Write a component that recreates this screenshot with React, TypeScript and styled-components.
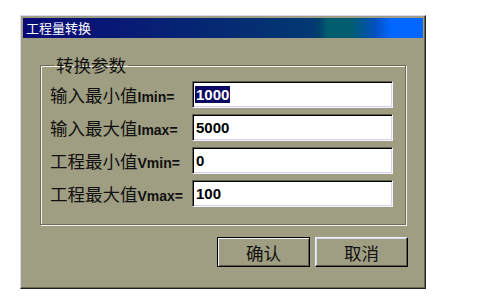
import React from 'react'
import styled, { createGlobalStyle } from 'styled-components'

const GlobalStyle = createGlobalStyle`
  html, body {
    margin: 0;
    padding: 0;
    background: #ffffff;
  }
  body {
    font-family: "Noto Sans CJK SC", "Liberation Sans", sans-serif;
  }
`

const Page = styled.div`
  width: 481px;
  height: 296px;
  padding: 15px 0 0 20px;
  box-sizing: border-box;
`

const Dialog = styled.div`
  width: 406px;
  height: 274px;
  box-sizing: border-box;
  background: #a09e82;
  border-top: 1px solid #d8d6f4;
  border-left: 1px solid #d8d6f4;
  border-right: 1px solid #202018;
  border-bottom: 1px solid #202018;
  box-shadow: inset -1px -1px 0 #6a6852;
  padding: 2px;
`

const TitleBar = styled.div`
  height: 20px;
  display: flex;
  align-items: center;
  padding-left: 3px;
  color: #ffffff;
  font-size: 13px;
  line-height: 20px;
  background: linear-gradient(
    to right,
    #0a0a76 0%,
    #033872 72%,
    #04406e 74%,
    #005c6e 76%,
    #005c6e 82%,
    #0250c0 88%,
    #0066ff 92%,
    #0066ff 100%
  );
`

const Group = styled.fieldset`
  width: 366px;
  box-sizing: border-box;
  margin: 18px 0 0 17px;
  padding: 7px 12px 17px 9px;
  border: 1px solid #6e6c58;
  box-shadow: 1px 1px 0 #f4f4ee, inset 1px 1px 0 #f4f4ee;
`

const Legend = styled.legend`
  padding: 0 2px;
  margin-left: 4px;
  font-size: 17.5px;
  line-height: 18px;
  color: #101010;
`

const Rows = styled.div`
  display: grid;
  grid-template-columns: 142px 201px;
  grid-auto-rows: 27px;
  row-gap: 6px;
  align-items: center;
`

const Label = styled.div`
  font-size: 17.5px;
  color: #101010;
  white-space: nowrap;
  display: flex;
  align-items: baseline;
`

const Latin = styled.span`
  font-family: "Liberation Sans", sans-serif;
  font-weight: bold;
  font-size: 14px;
`

const Field = styled.div`
  height: 27px;
  box-sizing: border-box;
  background: #ffffff;
  border-top: 1px solid #5e5c4a;
  border-left: 1px solid #5e5c4a;
  border-right: 1px solid #f4f4ff;
  border-bottom: 1px solid #f4f4ff;
  box-shadow: inset 1px 1px 0 #000000, inset -1px -1px 0 #d4d2ec;
  display: flex;
  align-items: center;
  padding-left: 2px;
  font-family: "Liberation Sans", sans-serif;
  font-weight: bold;
  font-size: 15px;
  color: #000000;
`

const Value = styled.span<{ $selected?: boolean }>`
  padding: 0 1px;
  line-height: 17px;
  background: ${p => (p.$selected ? '#0a0a62' : 'transparent')};
  color: ${p => (p.$selected ? '#ffffff' : '#000000')};
`

const ButtonRow = styled.div`
  display: flex;
  justify-content: flex-end;
  gap: 5px;
  margin-top: 12px;
  padding-right: 15px;
`

const Button = styled.div<{ $default?: boolean }>`
  width: 93px;
  height: 30px;
  box-sizing: border-box;
  display: flex;
  align-items: center;
  justify-content: center;
  font-size: 17.5px;
  color: #101010;
  background: #a09e82;
  border-top: 1px solid ${p => (p.$default ? '#000000' : '#f0f0ff')};
  border-left: 1px solid ${p => (p.$default ? '#000000' : '#f0f0ff')};
  border-right: 1px solid #000000;
  border-bottom: 1px solid #000000;
  box-shadow: ${p =>
    p.$default
      ? 'inset 1px 1px 0 #f0f0ff, inset -1px -1px 0 #5e5c4a'
      : 'inset -1px -1px 0 #5e5c4a, inset 1px 1px 0 #d8d6ee'};
`

const fields = [
  { name: '输入最小值', sym: 'Imin=', value: '1000', selected: true },
  { name: '输入最大值', sym: 'Imax=', value: '5000' },
  { name: '工程最小值', sym: 'Vmin=', value: '0' },
  { name: '工程最大值', sym: 'Vmax=', value: '100' },
]

const App = () => {
  return (
    <Page>
      <GlobalStyle />
      <Dialog>
        <TitleBar>工程量转换</TitleBar>
        <Group>
          <Legend>转换参数</Legend>
          <Rows>
            {fields.map(f => (
              <React.Fragment key={f.sym}>
                <Label>
                  {f.name}
                  <Latin>{f.sym}</Latin>
                </Label>
                <Field>
                  <Value $selected={f.selected}>{f.value}</Value>
                </Field>
              </React.Fragment>
            ))}
          </Rows>
        </Group>
        <ButtonRow>
          <Button $default>确认</Button>
          <Button>取消</Button>
        </ButtonRow>
      </Dialog>
    </Page>
  )
}

export default App
